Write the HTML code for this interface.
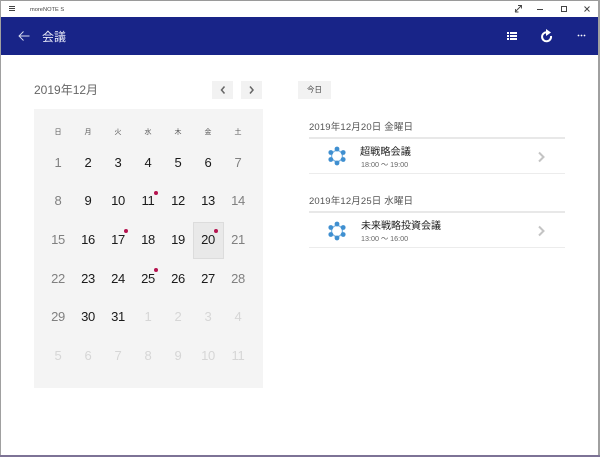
<!DOCTYPE html>
<html lang="ja"><head><meta charset="utf-8">
<style>
html,body{margin:0;padding:0;background:#fff}
body{width:600px;height:457px;position:relative;overflow:hidden;font-family:"Liberation Sans","Noto Sans CJK JP",sans-serif;color:#111}
div{position:absolute;white-space:nowrap}
.d{width:30px;margin-left:-15px;text-align:center;font-size:13px;letter-spacing:-.3px;line-height:16px;height:16px;color:#1a1a1a}
.o{color:#808080}.f{color:#d6d6d6}
.h{width:30px;margin-left:-15px;text-align:center;font-size:7px;line-height:10px;top:128px;color:#555}
.r{width:4px;height:4px;border-radius:2px;background:#b5134f}
.btn{background:#f2f2f2}
</style></head><body>
<div style="left:0;top:0;width:600px;height:17px;background:#fff"></div>
<div style="left:9px;top:6px;height:1px;background:#444;box-shadow:0 2px 0 #444,0 4px 0 #444;width:6px"></div>
<div style="left:30px;top:5px;font-size:5.700px;line-height:10px;color:#444">moreNOTE S</div>
<svg style="position:absolute;left:480px;top:0" width="120" height="17" fill="none" stroke="#444" stroke-width="1"><path d="M35 12l6-6M35.500 9v3h3M38 5.500h3.500v3" stroke-width=".9"/><path d="M57 9.500h6"/><rect x="81.500" y="6.500" width="5" height="5"/><path d="M104.500 6.500l5 5M109.500 6.500l-5 5"/></svg>
<div style="left:0;top:17px;width:600px;height:38px;background:#182488"></div>
<svg style="position:absolute;left:18px;top:30px" width="12" height="12" fill="none" stroke="#d8dcf0" stroke-width=".9"><path d="M1 6h10.500M5.500 1.500L1 6l4.500 4.500"/></svg>
<div style="left:42px;top:29px;font-size:12px;line-height:17px;color:#e6e8f6">会議</div>
<svg style="position:absolute;left:505px;top:29px" width="85" height="14" fill="#fff"><rect x="2" y="3" width="2" height="2"/><rect x="5" y="3" width="7" height="2"/><rect x="2" y="6" width="2" height="2"/><rect x="5" y="6" width="7" height="2"/><rect x="2" y="9" width="2" height="2"/><rect x="5" y="9" width="7" height="2"/><path d="M41 0v7l5-3.500z"/><path d="M42 3.300A4.500 4.500 0 1 0 46 7" fill="none" stroke="#fff" stroke-width="2"/><circle cx="73.500" cy="6.500" r=".9"/><circle cx="76.500" cy="6.500" r=".9"/><circle cx="79.500" cy="6.500" r=".9"/></svg>

<div style="left:34px;top:82px;font-size:12px;line-height:17px;color:#666">2019年12月</div>
<div class="btn" style="left:212px;top:81px;width:21px;height:18px"></div>
<div class="btn" style="left:241px;top:81px;width:21px;height:18px"></div>
<svg style="position:absolute;left:212px;top:81px" width="50" height="18" fill="none" stroke="#666" stroke-width="1.500"><path d="M12.500 5.500l-3 3.500 3 3.500M38 5.500l3 3.500-3 3.500"/></svg>
<div class="btn" style="left:298px;top:81px;width:33px;height:18px;font-size:7.500px;line-height:18px;text-align:center;color:#444">今日</div>

<div style="left:34px;top:109px;width:229px;height:279px;background:#f4f4f4"></div>
<div class="h" style="left:58px">日</div><div class="h" style="left:88px">月</div><div class="h" style="left:118px">火</div><div class="h" style="left:148px">水</div><div class="h" style="left:178px">木</div><div class="h" style="left:208px">金</div><div class="h" style="left:238px">土</div>

<div style="left:193px;top:222px;width:29px;height:35px;background:#e9e9e9;border:1px solid #dcdcdc"></div>

<div class="d o" style="left:58px;top:155px">1</div><div class="d" style="left:88px;top:155px">2</div><div class="d" style="left:118px;top:155px">3</div><div class="d" style="left:148px;top:155px">4</div><div class="d" style="left:178px;top:155px">5</div><div class="d" style="left:208px;top:155px">6</div><div class="d o" style="left:238px;top:155px">7</div>
<div class="d o" style="left:58px;top:193px">8</div><div class="d" style="left:88px;top:193px">9</div><div class="d" style="left:118px;top:193px">10</div><div class="d" style="left:148px;top:193px">11</div><div class="d" style="left:178px;top:193px">12</div><div class="d" style="left:208px;top:193px">13</div><div class="d o" style="left:238px;top:193px">14</div>
<div class="d o" style="left:58px;top:232px">15</div><div class="d" style="left:88px;top:232px">16</div><div class="d" style="left:118px;top:232px">17</div><div class="d" style="left:148px;top:232px">18</div><div class="d" style="left:178px;top:232px">19</div><div class="d" style="left:208px;top:232px">20</div><div class="d o" style="left:238px;top:232px">21</div>
<div class="d o" style="left:58px;top:271px">22</div><div class="d" style="left:88px;top:271px">23</div><div class="d" style="left:118px;top:271px">24</div><div class="d" style="left:148px;top:271px">25</div><div class="d" style="left:178px;top:271px">26</div><div class="d" style="left:208px;top:271px">27</div><div class="d o" style="left:238px;top:271px">28</div>
<div class="d o" style="left:58px;top:309px">29</div><div class="d" style="left:88px;top:309px">30</div><div class="d" style="left:118px;top:309px">31</div><div class="d f" style="left:148px;top:309px">1</div><div class="d f" style="left:178px;top:309px">2</div><div class="d f" style="left:208px;top:309px">3</div><div class="d f" style="left:238px;top:309px">4</div>
<div class="d f" style="left:58px;top:348px">5</div><div class="d f" style="left:88px;top:348px">6</div><div class="d f" style="left:118px;top:348px">7</div><div class="d f" style="left:148px;top:348px">8</div><div class="d f" style="left:178px;top:348px">9</div><div class="d f" style="left:208px;top:348px">10</div><div class="d f" style="left:238px;top:348px">11</div>

<div class="r" style="left:154px;top:191px"></div>
<div class="r" style="left:124px;top:229px"></div>
<div class="r" style="left:214px;top:229px"></div>
<div class="r" style="left:154px;top:268px"></div>

<div style="left:309px;top:121px;font-size:9.500px;line-height:14px;color:#555;letter-spacing:.15px">2019年12月20日 金曜日</div>
<div style="left:309px;top:137px;width:256px;height:2px;background:#e8e8e8"></div>
<div style="left:360px;top:145px;font-size:10.200px;line-height:15px;color:#222">超戦略会議</div>
<div style="left:361px;top:159px;font-size:7.200px;line-height:11px;color:#666">18:00 ～ 19:00</div>
<div style="left:309px;top:173px;width:256px;height:1px;background:#ececec"></div>

<div style="left:309px;top:195px;font-size:9.500px;line-height:14px;color:#555;letter-spacing:.15px">2019年12月25日 水曜日</div>
<div style="left:309px;top:211px;width:256px;height:2px;background:#e8e8e8"></div>
<div style="left:361px;top:219px;font-size:10px;line-height:15px;color:#222">未来戦略投資会議</div>
<div style="left:361px;top:233px;font-size:7.200px;line-height:11px;color:#666">13:00 ～ 16:00</div>
<div style="left:309px;top:247px;width:256px;height:1px;background:#ececec"></div>

<svg style="position:absolute;left:327px;top:146px" width="20" height="20" fill="#3f8fd0"><circle cx="10" cy="10" r="5.500" fill="none" stroke="#7fb6e2" stroke-width="1.300"/><circle cx="10" cy="3" r="2.400"/><circle cx="10" cy="17" r="2.400"/><circle cx="3.800" cy="6.500" r="2.400"/><circle cx="16.200" cy="6.500" r="2.400"/><circle cx="3.800" cy="13.500" r="2.400"/><circle cx="16.200" cy="13.500" r="2.400"/></svg>
<svg style="position:absolute;left:327px;top:221px" width="20" height="20" fill="#3f8fd0"><circle cx="10" cy="10" r="5.500" fill="none" stroke="#7fb6e2" stroke-width="1.300"/><circle cx="10" cy="3" r="2.400"/><circle cx="10" cy="17" r="2.400"/><circle cx="3.800" cy="6.500" r="2.400"/><circle cx="16.200" cy="6.500" r="2.400"/><circle cx="3.800" cy="13.500" r="2.400"/><circle cx="16.200" cy="13.500" r="2.400"/></svg>
<svg style="position:absolute;left:537px;top:151px" width="10" height="12" fill="none" stroke="#c4c4c4" stroke-width="2"><path d="M2 1.500l4.500 4.500-4.500 4.500"/></svg>
<svg style="position:absolute;left:537px;top:225px" width="10" height="12" fill="none" stroke="#c4c4c4" stroke-width="2"><path d="M2 1.500l4.500 4.500-4.500 4.500"/></svg>

<div style="left:0;top:0;width:600px;height:1px;background:#9a9a9a"></div>
<div style="left:0;top:0;width:1px;height:457px;background:#a0a0a0"></div>
<div style="left:598px;top:0;width:2px;height:457px;background:#a0a0a0"></div>
<div style="left:0;top:455px;width:600px;height:2px;background:#7d7396"></div>
</body></html>
